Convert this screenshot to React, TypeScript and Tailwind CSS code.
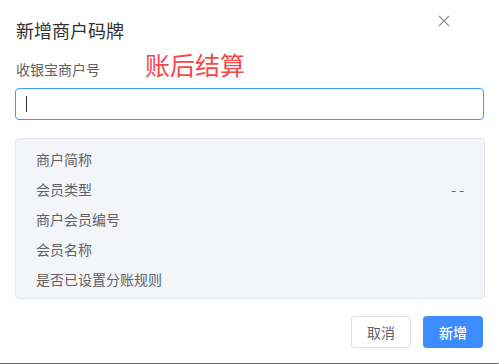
// 新增商户码牌 dialog
const rows = [
  { label: "商户简称", value: "" },
  { label: "会员类型", value: "- -" },
  { label: "商户会员编号", value: "" },
  { label: "会员名称", value: "" },
  { label: "是否已设置分账规则", value: "" },
];

export default function App() {
  return (
    <div
      className="w-[499px] h-[364px] bg-white flex flex-col border-b border-[#6b6b6b] overflow-hidden"
      style={{ fontFamily: '"Noto Sans CJK SC", "Noto Sans", sans-serif' }}
    >
      <div className="flex-1 flex flex-col px-[15px]">
        {/* Header */}
        <div className="flex items-start justify-between pt-[18px] pl-px">
          <h2 className="text-[18px] leading-6 text-[#303133]">新增商户码牌</h2>
          <button className="mt-[-3px] mr-[34px] text-[#909399]">
            <svg width="12" height="12" viewBox="0 0 12 12" fill="none">
              <path d="M1 1L11 11M11 1L1 11" stroke="currentColor" strokeWidth="1.2" />
            </svg>
          </button>
        </div>

        {/* Label row */}
        <div className="flex items-end mt-[7px] pl-px">
          <span className="text-[14px] leading-5 text-[#606266]">收银宝商户号</span>
          <span className="ml-[45px] text-[25px] leading-[30px] text-[#f5484a]">账后结算</span>
        </div>

        {/* Input */}
        <div className="mt-[9px] h-[32px] rounded-[4px] border border-[#409eff] flex items-center px-[10px]">
          <span className="w-px h-[16px] bg-[#303133]" />
        </div>

        {/* Info box */}
        <div className="mt-[18px] w-[470px] rounded-[4px] border border-[#e4e7ed] bg-[#f4f5f9] px-5 pt-[5px] pb-[4px]">
          {rows.map((r) => (
            <div key={r.label} className="h-[30px] flex items-center justify-between text-[14px] text-[#606266]">
              <span>{r.label}</span>
              <span>{r.value}</span>
            </div>
          ))}
        </div>

        {/* Footer */}
        <div className="mt-[17px] flex justify-end gap-3 pr-px">
          <button className="w-[60px] h-[32px] rounded-[4px] border border-[#dcdfe6] bg-white text-[14px] text-[#606266]">
            取消
          </button>
          <button className="w-[60px] h-[32px] rounded-[4px] bg-[#3c8cff] text-[14px] font-medium text-white">
            新增
          </button>
        </div>
      </div>
    </div>
  );
}
